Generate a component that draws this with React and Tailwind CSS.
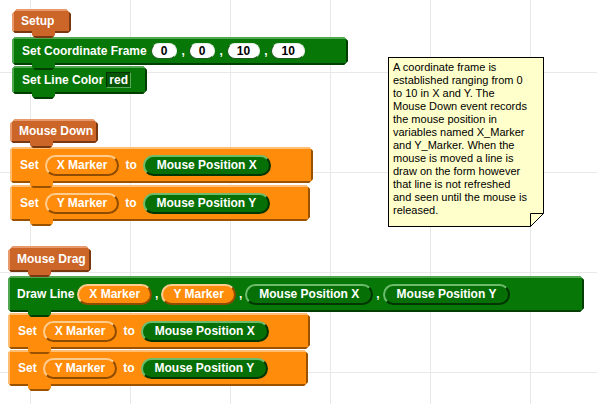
import React from "react";

// chamfered outlines for the block bodies
const CUT =
  "[clip-path:polygon(3px_0,calc(100%_-_4px)_0,100%_4px,100%_calc(100%_-_4px),calc(100%_-_4px)_100%,3px_100%,0_calc(100%_-_3px),0_3px)]";
const HAT_CUT =
  "[clip-path:polygon(5px_0,calc(100%_-_5px)_0,100%_5px,100%_calc(100%_-_3px),calc(100%_-_3px)_100%,3px_100%,0_calc(100%_-_3px),0_5px)]";
const TAB_CUT =
  "[clip-path:polygon(0_0,100%_0,100%_calc(100%_-_3px),calc(100%_-_3px)_100%,3px_100%,0_calc(100%_-_3px))]";

const SKIN = {
  hat: {
    body: "bg-[#cc6628] border-t-[#e89a6c] border-l-[#e89a6c] border-r-[#7a3810] border-b-[#7a3810]",
    tab: "bg-[#cc6628] border-b-[#7a3810]",
  },
  green: {
    body: "bg-[#077707] border-t-[#52a852] border-l-[#52a852] border-r-[#023e02] border-b-[#023e02]",
    tab: "bg-[#077707] border-b-[#023e02]",
  },
  orange: {
    body: "bg-[#ff8c0a] border-t-[#ffbe72] border-l-[#ffbe72] border-r-[#9a5200] border-b-[#9a5200]",
    tab: "bg-[#ff8c0a] border-b-[#9a5200]",
  },
};

const NOTE = [
  "A coordinate frame is",
  "established ranging from 0",
  "to 10 in X and Y. The",
  "Mouse Down event records",
  "the mouse position in",
  "variables named X_Marker",
  "and Y_Marker. When the",
  "mouse is moved a line is",
  "draw on the form however",
  "that line is not refreshed",
  "and seen until the mouse is",
  "released.",
];

function Block({ skin, hat, className, row = "gap-[6px] pl-[8px]", children }) {
  const s = SKIN[skin];
  return (
    <div className={`relative ${className}`}>
      <div className={`flex h-full items-center border-2 ${row} ${s.body} ${hat ? HAT_CUT : CUT}`}>
        {children}
      </div>
      <div
        className={`absolute left-[20px] top-[calc(100%_-_2px)] z-10 h-[7px] w-[23px] border-b-2 ${s.tab} ${TAB_CUT}`}
      />
    </div>
  );
}

function Var({ children }) {
  return (
    <div className="flex h-[21px] items-center rounded-full border-2 border-t-[#ffcc90] border-l-[#ffcc90] border-r-[#8f4c00] border-b-[#8f4c00] bg-[#ff8c0a] px-[10px]">
      {children}
    </div>
  );
}

function Reporter({ children }) {
  return (
    <div className="flex h-[21px] items-center rounded-full border-2 border-t-[#6cbc6c] border-l-[#6cbc6c] border-r-[#013501] border-b-[#013501] bg-[#067006] px-[12px]">
      {children}
    </div>
  );
}

function Num({ children }) {
  return (
    <div className="flex h-[16px] items-center rounded-full border border-t-[#e6f0e6] border-r-[#e6f0e6] border-l-[#1d5a1d] border-b-[#1d5a1d] bg-white px-[9px] text-black">
      {children}
    </div>
  );
}

const Comma = () => <span className="text-white">,</span>;

export default function App() {
  return (
    <div className="relative h-[404px] w-[597px] overflow-hidden bg-white bg-[linear-gradient(to_right,#e8e8e8_1px,transparent_1px),linear-gradient(to_bottom,#e8e8e8_1px,transparent_1px)] bg-[size:100px_100px] bg-[position:30px_72px] font-['Liberation_Sans',Arial,sans-serif] text-[12px] font-bold text-white">
      <div className="flex flex-col items-start gap-[25px] pt-[9px]">
        {/* Setup */}
        <div className="ml-[12px] flex flex-col items-start">
          <Block skin="hat" hat className="h-[24px] w-[59px]" row="pl-[7px]">
            Setup
          </Block>
          <Block skin="green" className="mt-[4px] h-[28px] w-[336px]" row="gap-[4px] pl-[8px]">
            <span>Set Coordinate Frame</span>
            <Num>0</Num>
            <Comma />
            <Num>0</Num>
            <Comma />
            <Num>10</Num>
            <Comma />
            <Num>10</Num>
          </Block>
          <Block skin="green" className="mt-[1px] h-[28px] w-[135px]" row="gap-[3px] pl-[8px]">
            <span>Set Line Color</span>
            <div className="flex h-[16px] items-center border border-t-[#023202] border-l-[#023202] border-r-[#5aa85a] border-b-[#5aa85a] bg-[#055505] px-[2px]">
              red
            </div>
          </Block>
        </div>

        {/* Mouse Down */}
        <div className="ml-[10px] flex flex-col items-start">
          <Block skin="hat" hat className="h-[24px] w-[88px]" row="pl-[7px]">
            Mouse Down
          </Block>
          <Block skin="orange" className="mt-[4px] h-[36px] w-[303px]">
            <span>Set</span>
            <Var>X Marker</Var>
            <span>to</span>
            <Reporter>Mouse Position X</Reporter>
          </Block>
          <Block skin="orange" className="mt-[2px] h-[36px] w-[300px]">
            <span>Set</span>
            <Var>Y Marker</Var>
            <span>to</span>
            <Reporter>Mouse Position Y</Reporter>
          </Block>
        </div>

        {/* Mouse Drag */}
        <div className="ml-[8px] flex flex-col items-start">
          <Block skin="hat" hat className="h-[26px] w-[83px]" row="pl-[7px]">
            Mouse Drag
          </Block>
          <Block skin="green" className="mt-[4px] h-[36px] w-[576px]" row="gap-[3px] pl-[7px]">
            <span>Draw Line</span>
            <Var>X Marker</Var>
            <Comma />
            <Var>Y Marker</Var>
            <Comma />
            <Reporter>Mouse Position X</Reporter>
            <Comma />
            <Reporter>Mouse Position Y</Reporter>
          </Block>
          <Block skin="orange" className="mt-[1px] h-[36px] w-[302px]">
            <span>Set</span>
            <Var>X Marker</Var>
            <span>to</span>
            <Reporter>Mouse Position X</Reporter>
          </Block>
          <Block skin="orange" className="mt-[1px] h-[36px] w-[300px]">
            <span>Set</span>
            <Var>Y Marker</Var>
            <span>to</span>
            <Reporter>Mouse Position Y</Reporter>
          </Block>
        </div>
      </div>

      {/* comment note */}
      <div className="absolute left-[388px] top-[57px] h-[170px] w-[156px] border border-black bg-[#ffffcc] px-[4px] pt-[3px] text-[11px] font-normal leading-[13px] text-black">
        {NOTE.map((line) => (
          <div key={line} className="whitespace-nowrap">
            {line}
          </div>
        ))}
        <svg className="absolute -bottom-px -right-px" width="14" height="14" viewBox="0 0 14 14">
          <polygon points="14,0 14,14 0,14" fill="white" />
          <path d="M0.5 0.5 H13.5 L0.5 13.5 Z" fill="#ffffcc" stroke="black" strokeWidth="1" />
        </svg>
      </div>
    </div>
  );
}
